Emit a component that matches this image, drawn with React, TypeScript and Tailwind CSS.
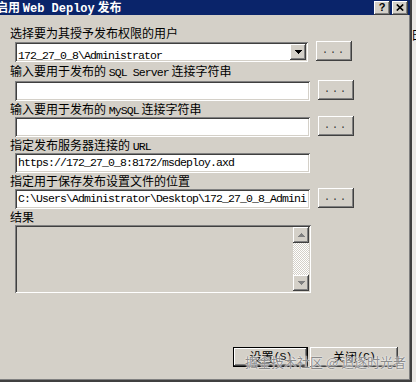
import type { ReactNode } from "react";

// Win classic 3D edges
const sunken =
  "shadow-[inset_1px_1px_0_#808080,inset_-1px_-1px_0_#ffffff,inset_2px_2px_0_#404040,inset_-2px_-2px_0_#d4d0c8]";
const raised =
  "shadow-[inset_-1px_-1px_0_#404040,inset_1px_1px_0_#ffffff,inset_-2px_-2px_0_#808080,inset_2px_2px_0_#d4d0c8]";

/** 半角文字（SimSun風の等幅） */
function M({ children }: { children: ReactNode }) {
  return (
    <span className="font-['Liberation_Mono',monospace] text-[11.5px] tracking-[-0.9px]">
      {children}
    </span>
  );
}

function Label({ children, className = "" }: { children: ReactNode; className?: string }) {
  return (
    <div className={`h-4 pl-[10px] text-[12px] leading-4 whitespace-nowrap text-black ${className}`}>
      {children}
    </div>
  );
}

function TextBox({ value, width = "w-[295px]" }: { value?: string; width?: string }) {
  return (
    <div className={`flex h-5 ${width} items-center overflow-hidden bg-white pl-[3px] whitespace-nowrap ${sunken}`}>
      {value && <M>{value}</M>}
    </div>
  );
}

function DotButton() {
  return (
    <div className={`-mt-px flex h-5 w-9 items-center justify-center bg-[#d4d0c8] ${raised}`}>
      <span className="font-['Liberation_Mono',monospace] text-[10px] leading-none tracking-[2px] text-[#303030]">
        ...
      </span>
    </div>
  );
}

function Arrow({ up, color }: { up?: boolean; color: string }) {
  return (
    <svg width="7" height="4" viewBox="0 0 7 4" shapeRendering="crispEdges">
      <path d={up ? "M3.5 0L7 4H0Z" : "M0 0H7L3.5 4Z"} fill={color} />
    </svg>
  );
}

export default function App() {
  return (
    <div className="relative flex h-[382px] w-[416px] overflow-hidden bg-[#ebe9e6] font-['Noto_Sans_CJK_SC',sans-serif]">
      {/* ダイアログ本体 */}
      <div className="flex h-[382px] w-[412px] flex-col border-r-2 border-b-2 border-[#404040] bg-[#d4d0c8] shadow-[inset_-1px_-1px_0_#808080]">
        {/* タイトルバー */}
        <div className="flex h-[15px] items-center bg-[#0a246a] pr-[2px]">
          <div className="-ml-[4px] text-[12px] leading-[15px] font-bold whitespace-nowrap text-white">
            启用 <span className="font-['Liberation_Mono',monospace]">Web Deploy</span> 发布
          </div>
          <div className="flex-1" />
          <div className="flex gap-[2px]">
            <div className={`flex h-[14px] w-4 items-center justify-center bg-[#d4d0c8] ${raised}`}>
              <span className="font-['Liberation_Sans',sans-serif] text-[11px] leading-none font-bold text-black">?</span>
            </div>
            <div className={`flex h-[14px] w-4 items-center justify-center bg-[#d4d0c8] ${raised}`}>
              <svg width="8" height="7" viewBox="0 0 8 7">
                <path d="M0.8 0.5L7.2 6.5M7.2 0.5L0.8 6.5" stroke="#000" strokeWidth="1.7" />
              </svg>
            </div>
          </div>
        </div>

        {/* 入力エリア */}
        <Label className="mt-[10px]">选择要为其授予发布权限的用户</Label>
        <div className="mt-px flex items-start gap-2 pl-[15px]">
          <div className={`flex h-5 w-[293px] items-center bg-white p-[2px] ${sunken}`}>
            <div className="flex-1 overflow-hidden pl-px whitespace-nowrap">
              <M>172_27_0_8\Administrator</M>
            </div>
            <div className={`flex h-4 w-4 items-center justify-center bg-[#d4d0c8] ${raised}`}>
              <Arrow color="#000" />
            </div>
          </div>
          <DotButton />
        </div>

        <Label className="mt-px">
          输入要用于发布的 <M>SQL Server</M> 连接字符串
        </Label>
        <div className="mt-[2px] flex items-start gap-2 pl-[15px]">
          <TextBox />
          <DotButton />
        </div>

        <Label>
          输入要用于发布的 <M>MySQL</M> 连接字符串
        </Label>
        <div className="flex items-start gap-2 pl-[15px]">
          <TextBox />
          <DotButton />
        </div>

        <Label>
          指定发布服务器连接的 <M>URL</M>
        </Label>
        <div className="flex items-start gap-2 pl-[15px]">
          <TextBox value="https://172_27_0_8:8172/msdeploy.axd" />
        </div>

        <Label>指定用于保存发布设置文件的位置</Label>
        <div className="flex items-start gap-2 pl-[15px]">
          <TextBox value="C:\Users\Administrator\Desktop\172_27_0_8_Admini" />
          <DotButton />
        </div>

        <Label>结果</Label>
        {/* 結果（無効テキストボックス＋スクロールバー） */}
        <div className="pl-[15px]">
          <div className={`flex h-[68px] w-[296px] bg-[#d4d0c8] p-[2px] ${sunken}`}>
            <div className="flex-1" />
            <div className="flex w-4 flex-col">
              <div className={`flex h-4 items-center justify-center bg-[#d4d0c8] ${raised}`}>
                <Arrow up color="#808080" />
              </div>
              <div className="flex-1 bg-[image:repeating-conic-gradient(#ffffff_0%_25%,#d4d0c8_0%_50%)] bg-[length:2px_2px]" />
              <div className={`flex h-4 items-center justify-center bg-[#d4d0c8] ${raised}`}>
                <Arrow color="#808080" />
              </div>
            </div>
          </div>
        </div>

        {/* 下部ボタン */}
        <div className="mt-[54px] flex justify-end gap-[2px] pr-[12px]">
          <div className="h-5 w-[75px] border border-black">
            <div className={`flex h-full items-center justify-center bg-[#d4d0c8] text-[12px] leading-none text-black ${raised}`}>
              设置<M>(S)</M>
            </div>
          </div>
          <div className={`flex h-5 w-[88px] items-center justify-center bg-[#d4d0c8] text-[12px] leading-none text-black ${raised}`}>
            关闭<M>(C)</M>
          </div>
        </div>
      </div>

      {/* 背後のウィンドウの一部 */}
      <div className="w-1 overflow-hidden">
        <div className="mt-[29px] -ml-px text-[12px] leading-[12px] text-black">日</div>
      </div>

      {/* 透かし */}
      <div className="absolute top-[354px] left-[245px] text-[13px] leading-4 whitespace-nowrap text-[#8c8c8c] [text-shadow:0_0_1px_#fff,0_0_2px_#fff]">
        掘金技术社区 @ 追逐时光者
      </div>
    </div>
  );
}
